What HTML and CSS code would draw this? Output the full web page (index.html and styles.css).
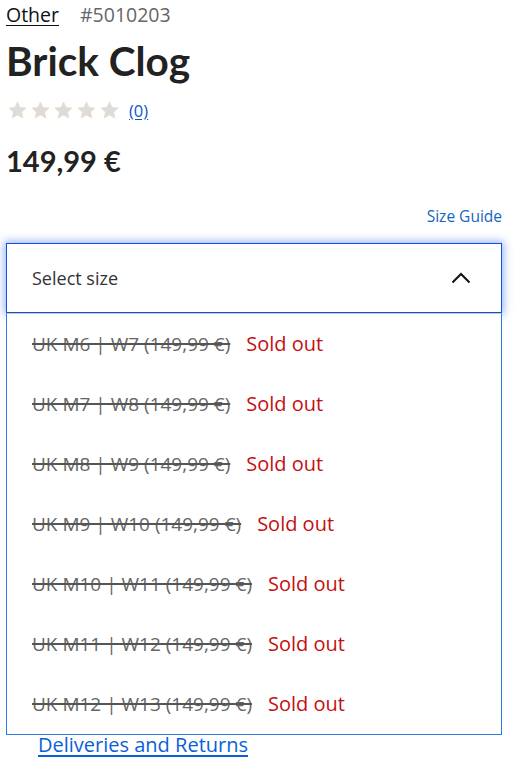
FILE: index.html
```html
<!DOCTYPE html>
<html lang="en">
<head>
<meta charset="utf-8">
<title>Brick Clog</title>
<link rel="stylesheet" href="styles.css">
</head>
<body>
<main class="product">
  <div class="meta">
    <a class="brand" href="#">Other</a>
    <span class="sku">#5010203</span>
  </div>
  <h1 class="title">Brick Clog</h1>
  <div class="rating">
    <div class="stars">
      <svg class="star" viewBox="0 0 24 24"><path d="M12 2.2l2.9 6.3 6.9.7-5.2 4.6 1.5 6.8L12 17.1l-6.1 3.5 1.5-6.8-5.2-4.6 6.9-.7z"/></svg>
      <svg class="star" viewBox="0 0 24 24"><path d="M12 2.2l2.9 6.3 6.9.7-5.2 4.6 1.5 6.8L12 17.1l-6.1 3.5 1.5-6.8-5.2-4.6 6.9-.7z"/></svg>
      <svg class="star" viewBox="0 0 24 24"><path d="M12 2.2l2.9 6.3 6.9.7-5.2 4.6 1.5 6.8L12 17.1l-6.1 3.5 1.5-6.8-5.2-4.6 6.9-.7z"/></svg>
      <svg class="star" viewBox="0 0 24 24"><path d="M12 2.2l2.9 6.3 6.9.7-5.2 4.6 1.5 6.8L12 17.1l-6.1 3.5 1.5-6.8-5.2-4.6 6.9-.7z"/></svg>
      <svg class="star" viewBox="0 0 24 24"><path d="M12 2.2l2.9 6.3 6.9.7-5.2 4.6 1.5 6.8L12 17.1l-6.1 3.5 1.5-6.8-5.2-4.6 6.9-.7z"/></svg>
    </div>
    <a class="count" href="#">(0)</a>
  </div>
  <div class="price">149,99 €</div>
  <div class="guide-row"><a class="guide" href="#">Size Guide</a></div>
  <div class="select-wrap">
    <div class="select">
      <span>Select size</span>
      <svg class="chev" viewBox="0 0 20 12"><path d="M1.5 10.5L10 2l8.5 8.5"/></svg>
    </div>
    <ul class="options">
      <li><s>UK M6 | W7 (149,99 €)</s><span class="sold">Sold out</span></li>
      <li><s>UK M7 | W8 (149,99 €)</s><span class="sold">Sold out</span></li>
      <li><s>UK M8 | W9 (149,99 €)</s><span class="sold">Sold out</span></li>
      <li><s>UK M9 | W10 (149,99 €)</s><span class="sold">Sold out</span></li>
      <li><s>UK M10 | W11 (149,99 €)</s><span class="sold">Sold out</span></li>
      <li><s>UK M11 | W12 (149,99 €)</s><span class="sold">Sold out</span></li>
      <li><s>UK M12 | W13 (149,99 €)</s><span class="sold">Sold out</span></li>
    </ul>
  </div>
  <a class="delivery" href="#">Deliveries and Returns</a>
</main>
</body>
</html>
```
FILE: styles.css
```css
* { box-sizing: border-box; }
html, body { margin: 0; padding: 0; background: #fff; }
body { font-family: "Open Sans", "Noto Sans", sans-serif; color: #222; }
.product { padding: 2px 14px 0 6px; display: flex; flex-direction: column; }
.meta { display: flex; align-items: baseline; gap: 21px; font-size: 19.5px; line-height: 26px; }
.brand { color: #111; text-decoration: underline; text-underline-offset: 3px; }
.sku { color: #666; }
.title { margin: 10px 0 0; font-family: "Lato", sans-serif; font-size: 40.5px; line-height: 46px; font-weight: 700; color: #222; }
.rating { display: flex; align-items: center; gap: 9px; margin-top: 14px; height: 24px; }
.stars { display: flex; gap: 2px; padding-left: 1px; }
.star { width: 21px; height: 21px; fill: #dcdcdc; stroke: #ecd9b8; stroke-width: 0.8; stroke-linejoin: round; }
.count { color: #0a57c9; font-size: 16.5px; text-underline-offset: 2px; }
.price { margin-top: 22px; font-family: "Lato", sans-serif; font-size: 29px; font-weight: 700; line-height: 34px; color: #222; }
.guide-row { display: flex; justify-content: flex-end; margin-top: 29px; }
.guide { color: #1565c0; font-size: 15.5px; text-decoration: none; line-height: 18px; }
.select-wrap { margin-top: 18px; position: relative; }
.select { height: 70px; border: 1px solid #1150d6; box-shadow: 0 0 8px 2px rgba(40,100,230,0.45); display: flex; align-items: center; justify-content: space-between; padding: 0 30px 0 25px; font-size: 18px; color: #333; background: #fff; }
.chev { width: 20px; height: 12px; fill: none; stroke: #111; stroke-width: 2; }
.options { list-style: none; margin: 0; padding: 0; border: 1px solid #2a7be4; border-top: 1px solid #c8c8c8; background: #fff; height: 422px; }
.options li { height: 60px; display: flex; align-items: center; gap: 16px; padding: 0 0 3px 25px; font-size: 19px; }
.options li:first-child { margin-top: 1px; }
.options s { color: #666; text-decoration-thickness: 2px; text-decoration-color: #555; }
.sold { color: #c40f0f; font-size: 20px; }
.delivery { margin: -2px 0 0 32px; align-self: flex-start; color: #0a5fd6; font-size: 20px; line-height: 24px; text-underline-offset: 3px; }
```
